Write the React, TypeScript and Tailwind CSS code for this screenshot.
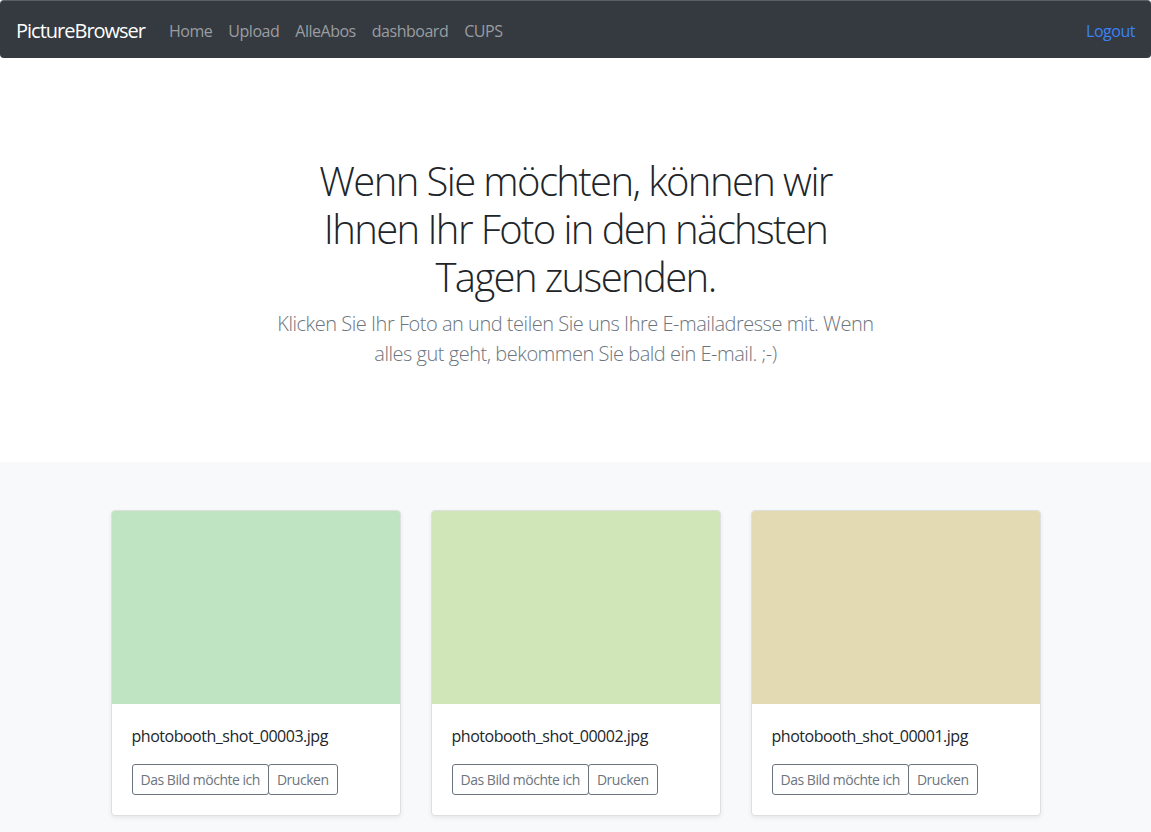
import React from 'react';

const shots = [
  { name: 'photobooth_shot_00003.jpg', color: 'bg-[#bfe4c1]' },
  { name: 'photobooth_shot_00002.jpg', color: 'bg-[#d0e5b8]' },
  { name: 'photobooth_shot_00001.jpg', color: 'bg-[#e3dab4]' },
];

const links = ['Home', 'Upload', 'AlleAbos', 'dashboard', 'CUPS'];

function Navbar() {
  return (
    <nav className="h-[58px] bg-[#343a40] rounded-[4px] border-t border-[#5a5f64] flex items-center px-4 pt-[2px]">
      <span className="text-[20px] text-white mr-[16px] leading-[30px] tracking-[-0.05em]">PictureBrowser</span>
      <ul className="flex">
        {links.map((l) => (
          <li key={l} className="px-2 text-[16px] text-[#9b9da0]">{l}</li>
        ))}
      </ul>
      <span className="ml-auto text-[16px] text-[#3b82f6]">Logout</span>
    </nav>
  );
}

function Card({ name, color }: { name: string; color: string }) {
  return (
    <div className="bg-white border border-[#dfdfdf] rounded-[4px] shadow-[0_2px_4px_rgba(0,0,0,0.075)] overflow-hidden">
      <div className={`h-[193px] ${color}`} />
      <div className="p-5">
        <p className="text-[16px] leading-6 text-[#212529] mb-4">{name}</p>
        <div className="flex">
          <button className="h-[31px] px-2 text-[14px] text-[#6c757d] border border-[#6c757d] rounded-[3px]">
            Das Bild möchte ich
          </button>
          <button className="h-[31px] px-2 text-[14px] text-[#6c757d] border border-[#6c757d] rounded-[3px] -ml-px">
            Drucken
          </button>
        </div>
      </div>
    </div>
  );
}

export default function App() {
  return (
    <div className="min-h-screen bg-white font-['Segoe_UI','Open_Sans',sans-serif] tracking-[-0.03em] text-[#212529]">
      <Navbar />
      <section className="pt-[99px] pb-[93px] text-center">
        <div className="max-w-[610px] mx-auto">
          <h1 className="max-w-[560px] mx-auto text-[40px] leading-[48px] font-light mb-2 tracking-[-0.04em]">
            Wenn Sie möchten, können wir Ihnen Ihr Foto in den nächsten Tagen zusenden.
          </h1>
          <p className="text-[20px] leading-[30px] font-light text-[#6c757d]">
            Klicken Sie Ihr Foto an und teilen Sie uns Ihre E-mailadresse mit. Wenn alles gut geht, bekommen Sie bald ein E-mail. ;-)
          </p>
        </div>
      </section>
      <section className="bg-[#f8f9fa] py-12">
        <div className="w-[930px] mx-auto grid grid-cols-3 gap-[30px]">
          {shots.map((s) => (
            <Card key={s.name} {...s} />
          ))}
        </div>
      </section>
    </div>
  );
}
